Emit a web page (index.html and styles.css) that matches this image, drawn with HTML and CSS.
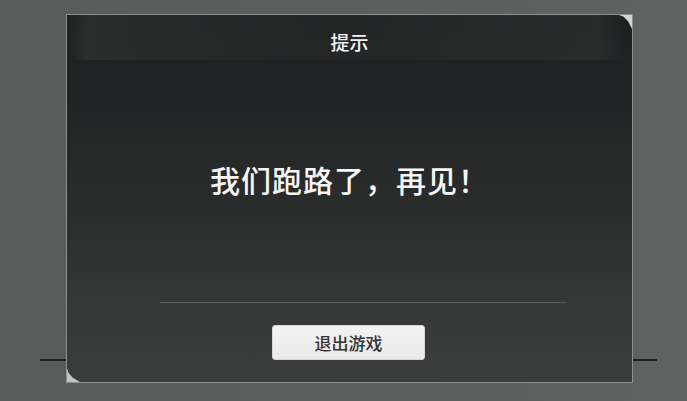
FILE: index.html
```html
<!DOCTYPE html>
<html lang="zh-CN">
<head>
<meta charset="utf-8">
<title>提示</title>
<link rel="stylesheet" href="styles.css">
</head>
<body>
<div class="stage">
  <span class="rail rail-left"></span>
  <div class="dialog">
    <div class="panel">
      <div class="header"><span class="title">提示</span></div>
      <div class="body">
        <p class="message">我们跑路了，再见！</p>
        <div class="divider"></div>
        <div class="actions">
          <button class="btn">退出游戏</button>
        </div>
      </div>
    </div>
  </div>
  <span class="rail rail-right"></span>
</div>
</body>
</html>
```

FILE: styles.css
```css
* { box-sizing: border-box; }
html, body { margin: 0; padding: 0; }
body {
  width: 687px;
  height: 401px;
  overflow: hidden;
  background: linear-gradient(90deg, #5a5b5b 0%, #5d5e5e 60%, #616262 100%);
  font-family: "Noto Sans CJK SC", "Noto Sans", sans-serif;
}
.stage {
  display: flex;
  align-items: flex-start;
  padding: 14px 0 0 40px;
}
.rail {
  display: block;
  height: 2px;
  background: #1e1e1e;
  margin-top: 345px;
}
.rail-left { width: 26px; }
.rail-right { width: 24px; }
.dialog {
  width: 567px;
  height: 369px;
  border: 1px solid #8e8f8f;
  display: flex;
}
.panel {
  position: relative;
  flex: 1;
  display: flex;
  flex-direction: column;
  background: linear-gradient(180deg, #1e1f20 0%, #222324 25%, #2c2d2d 55%, #363737 80%, #3b3c3c 100%);
  overflow: hidden;
}
.panel::before,
.panel::after {
  content: "";
  position: absolute;
  width: 13px;
  height: 14px;
}
.panel::before {
  top: 0;
  right: 0;
  background: #d2d2d2;
  clip-path: polygon(0 0, 100% 0, 100% 100%, 70% 45%, 35% 12%);
}
.panel::after {
  bottom: 0;
  left: 0;
  background: #c4c4c4;
  clip-path: polygon(0 0, 12% 35%, 45% 70%, 100% 100%, 0 100%);
}
.header {
  height: 45px;
  padding-top: 17px;
  text-align: center;
  background: linear-gradient(90deg, rgba(45,46,46,0) 0%, rgba(50,51,51,0.7) 4%, rgba(44,45,45,0.6) 15%, rgba(40,41,41,0.5) 50%, rgba(46,47,47,0.6) 85%, rgba(48,49,49,0.6) 94%, rgba(45,46,46,0) 99%);
}
.title {
  display: block;
  font-size: 19px;
  line-height: 20px;
  font-weight: 500;
  color: #f2f2f2;
}
.body {
  flex: 1;
  display: flex;
  flex-direction: column;
}
.message {
  margin: 104px 0 0;
  text-align: center;
  font-size: 30px;
  line-height: 30px;
  font-weight: 500;
  color: #f7f7f7;
  letter-spacing: 1px;
}
.divider {
  height: 1px;
  margin: 108px 65px 0 93px;
  background: #5a5b5b;
}
.actions {
  display: flex;
  justify-content: center;
  padding-top: 22px;
}
.btn {
  width: 153px;
  height: 35px;
  margin-right: 2px;
  border: 1px solid #d6d6d6;
  border-radius: 3px;
  background: linear-gradient(180deg, #f2f2f2 0%, #eaeaea 100%);
  font-family: "Noto Sans CJK SC", "Noto Sans", sans-serif;
  font-size: 17px;
  font-weight: 500;
  color: #333333;
  padding: 0;
  line-height: 33px;
}
```
